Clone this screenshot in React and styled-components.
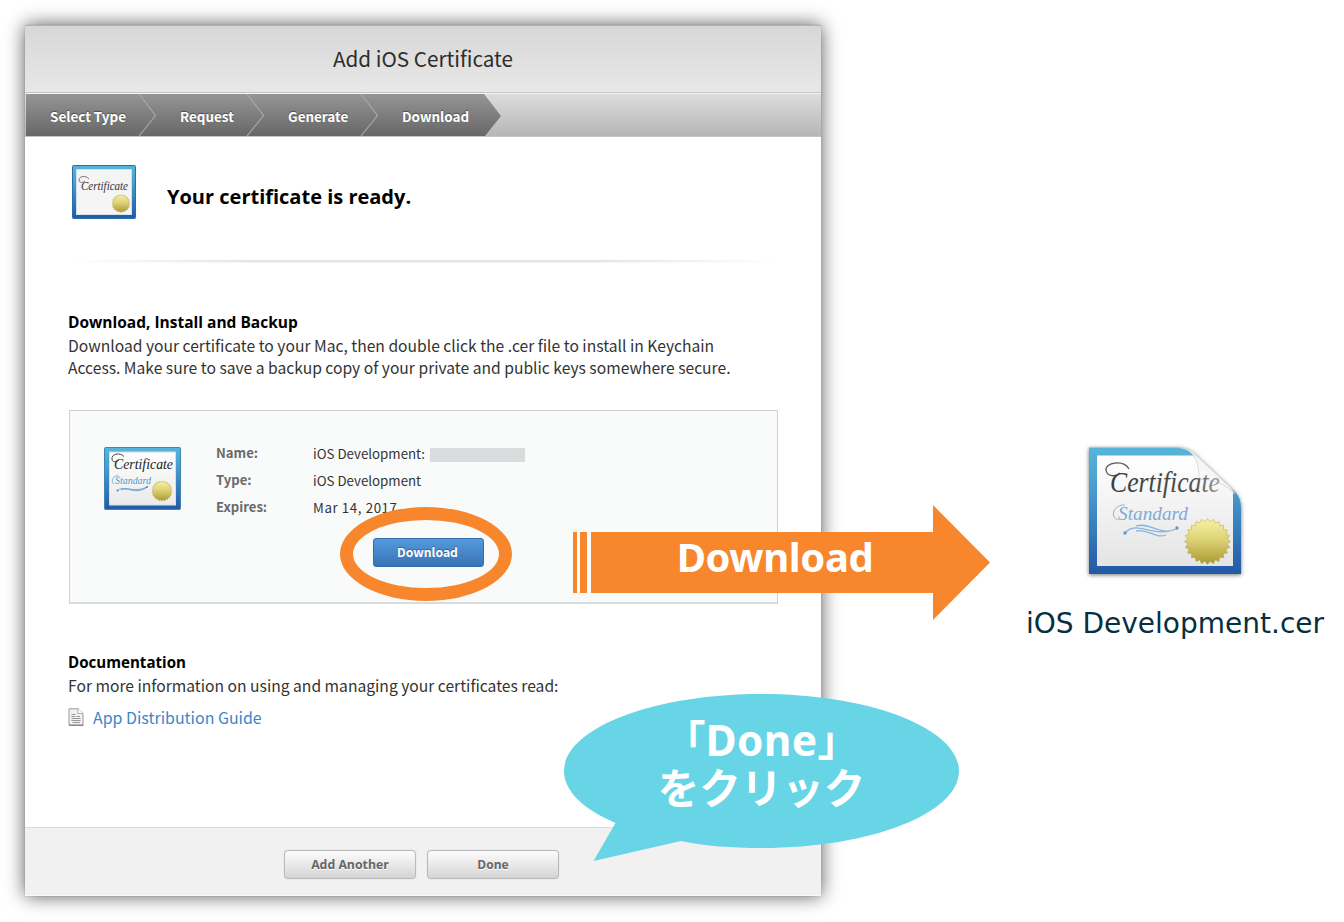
import React from "react";
import styled, { createGlobalStyle } from "styled-components";

const GlobalStyle = createGlobalStyle`
  * { box-sizing: border-box; }
  body { margin: 0; background: #fff; }
  h1, h2, h3, p, dl, dt, dd { margin: 0; font-weight: 400; }
`;

const uiFont = `"Noto Sans CJK JP", "Open Sans", sans-serif`;
const headingFont = `"Open Sans", "Noto Sans", sans-serif`;

const Page = styled.main`
  position: relative;
  display: flex;
  align-items: flex-start;
  width: 1344px;
  height: 922px;
  overflow: hidden;
  padding: 25px 0 0 25px;
  font-family: ${uiFont};
`;

const Window = styled.section`
  display: flex;
  flex-direction: column;
  flex: none;
  width: 796px;
  height: 871px;
  background: #fff;
  box-shadow: 0 0 18px rgba(0, 0, 0, 0.66), 0 0 1px rgba(0, 0, 0, 0.25);
`;

const TitleBar = styled.header`
  display: flex;
  align-items: center;
  justify-content: center;
  height: 69px;
  padding-bottom: 3px;
  border-top: 1px solid #b4b4b4;
  border-bottom: 1px solid #f4f4f4;
  background: linear-gradient(#d7d7d7, #e8e8e8);
  box-shadow: inset 0 -1px 0 #c4c4c4;
`;

const Title = styled.h1`
  font-size: 20.7px;
  line-height: 30px;
  color: #2d2d2d;
`;

const Steps = styled.nav`
  display: flex;
  flex: none;
  height: 43px;
  padding-left: 1px;
  background: linear-gradient(#dcdcdc, #b6b6b6);
  border-bottom: 1px solid #c4c4c4;
`;

const Step = styled.div`
  display: flex;
  justify-content: space-between;
  width: ${(p) => p.$width}px;
  padding-left: 24px;
  background: linear-gradient(#959595, #676767) left /
    ${(p) => (p.$last ? "calc(100% - 17px)" : "100%")} 100% no-repeat;
  color: #fff;
  font-size: 13.45px;
  font-weight: 700;
  line-height: 44px;
  text-shadow: 0 -1px 1px rgba(0, 0, 0, 0.4);
`;

const Chevron = styled.svg`
  display: block;
  width: 18px;
  height: 42px;
`;

const Body = styled.div`
  flex: 1;
  padding: 28px 43px 0 43px;
`;

const Ready = styled.div`
  display: flex;
  gap: 31px;
  height: 95px;
  padding-left: 4px;
`;

const ReadyText = styled.h2`
  margin-top: 18px;
  font-family: ${headingFont};
  font-size: 20px;
  font-weight: 700;
  line-height: 28px;
  color: #000;
`;

const Divider = styled.div`
  width: 704px;
  height: 3px;
  margin-left: 4px;
  background: linear-gradient(90deg, #fff, transparent 25%, transparent 75%, #fff),
    linear-gradient(#e0e0e0, #e8e8e8 50%, #f8f8f8);
`;

const Section = styled.section`
  margin-top: ${(p) => p.$top}px;
`;

const SectionTitle = styled.h3`
  font-family: ${headingFont};
  font-size: ${(p) => p.$size}px;
  font-weight: 700;
  line-height: 24px;
  margin-bottom: 1px;
  color: #000;
`;

const Text = styled.p`
  font-size: 15.65px;
  line-height: 22px;
  white-space: pre-line;
  color: #333;
`;

const Card = styled.div`
  display: flex;
  gap: 35px;
  width: 709px;
  height: 194px;
  margin: 31px 0 0 1px;
  padding: 28px 34px;
  border: 1px solid #cfd2d2;
  border-bottom: 2px solid #d9dcdc;
  background: #f9fbfa;
`;

const CardIcon = styled.div`
  padding-top: 8px;
`;

const Details = styled.dl`
  display: grid;
  grid-template-columns: 97px auto;
  grid-auto-rows: 27px;
  align-content: start;
  line-height: 27px;
  font-size: 13.3px;
`;

const Label = styled.dt`
  font-size: 13.1px;
  font-weight: 700;
  color: #6a6a6a;
`;

const Value = styled.dd`
  display: flex;
  align-items: center;
  gap: 5px;
  padding-top: 1px;
  color: #333;
  letter-spacing: ${(p) => p.$spacing || 0}px;
`;

const Redacted = styled.span`
  width: 95px;
  height: 14px;
  margin-top: 3px;
  background: #dadbdd;
`;

const DownloadButton = styled.button`
  grid-column: 1 / -1;
  width: 111px;
  height: 29px;
  margin: 18px 0 0 157px;
  padding: 0 2px 1px 0;
  border: 1px solid #2f6dad;
  border-radius: 3px;
  background: linear-gradient(#549bdc, #3a72b8);
  color: #fff;
  font: 700 12.2px ${uiFont};
  line-height: 26px;
  text-shadow: 0 -1px 1px rgba(0, 0, 0, 0.3);
`;

const GuideLink = styled.a`
  display: flex;
  align-items: center;
  gap: 9px;
  margin-top: 8px;
  font-size: 15.95px;
  line-height: 24px;
  color: #3a87c8;
`;

const Footer = styled.footer`
  display: flex;
  justify-content: center;
  gap: 11px;
  height: 69px;
  padding: 22px 3px 0 0;
  border-top: 1px solid #dcdcdc;
  border-bottom: 1px solid #fafafa;
  background: #f1f1f1;
`;

const FooterButton = styled.button`
  width: 132px;
  height: 29px;
  padding: 1px 0 0;
  border: 1px solid #b9b9b9;
  border-radius: 4px;
  background: linear-gradient(#fdfdfd, #d4d4d4);
  box-shadow: 0 0 1px rgba(0, 0, 0, 0.25);
  color: #666;
  font: 700 ${(p) => p.$size}px ${headingFont};
  line-height: 26px;
  text-shadow: 0 1px 0 #fff;
`;

const FileResult = styled.figure`
  display: flex;
  flex-direction: column;
  align-items: flex-start;
  width: 310px;
  margin: 416px 0 0 205px;
`;

const FileIcon = styled.div`
  height: 140px;
  margin-left: 56px;
`;

const FileName = styled.figcaption`
  margin-top: 25px;
  font: 28px "DejaVu Sans", sans-serif;
  line-height: 36px;
  white-space: nowrap;
  color: #06303f;
`;

const Ring = styled.div`
  position: absolute;
  left: 340px;
  top: 507px;
  width: 172px;
  height: 94px;
  border: 13px solid #f8862d;
  border-radius: 50%;
`;

const Callout = styled.div`
  position: absolute;
  left: ${(p) => p.$x}px;
  top: ${(p) => p.$y}px;
  width: ${(p) => p.$w}px;
  height: ${(p) => p.$h}px;
  color: #fff;
  text-align: center;
  font-weight: 700;
`;

const CalloutShape = styled.svg`
  position: absolute;
  inset: 0;
  width: 100%;
  height: 100%;
`;

const ArrowText = styled.div`
  position: relative;
  padding: 25px 14px 0 0;
  font-family: "Noto Sans", sans-serif;
  font-size: 40px;
  line-height: 54px;
  letter-spacing: -0.4px;
`;

const BubbleText = styled.div`
  position: relative;
  display: flex;
  flex-direction: column;
  align-items: center;
  padding-top: 21px;
  font-family: "Noto Sans", "Noto Sans CJK JP", sans-serif;
  font-size: 41.5px;
`;

const BubbleLine = styled.div`
  height: 49px;
  line-height: 49px;
  white-space: nowrap;
`;

const BubbleWord = styled.span`
  font-size: 42.5px;
  letter-spacing: 0.3px;
`;

const Drawing = styled.svg`
  display: block;
  flex: none;
  overflow: visible;
`;

function sealPoints(cx, cy, r, teeth) {
  return Array.from({ length: teeth * 2 }, (_, i) => {
    const a = (Math.PI * i) / teeth;
    const d = i % 2 ? r * 0.87 : r;
    return `${(cx + d * Math.sin(a)).toFixed(2)},${(cy - d * Math.cos(a)).toFixed(2)}`;
  }).join(" ");
}

function Seal({ id, cx, cy, r, teeth }) {
  return (
    <>
      <linearGradient id={id} x1="0" y1="0" x2="0" y2="1">
        <stop offset="0" stopColor="#f8f2a4" />
        <stop offset="0.45" stopColor="#ddd377" />
        <stop offset="1" stopColor="#a9982f" />
      </linearGradient>
      <polygon points={sealPoints(cx, cy, r, teeth)} fill={`url(#${id})`} stroke="#b5a440" strokeWidth="0.5" />
    </>
  );
}

function BlueFrame({ id }) {
  return (
    <linearGradient id={id} x1="0" y1="0" x2="0" y2="1">
      <stop offset="0" stopColor="#58b5d9" />
      <stop offset="0.3" stopColor="#4a9fd0" />
      <stop offset="1" stopColor="#2259a5" />
    </linearGradient>
  );
}

const script = { fontFamily: '"Liberation Serif", serif', fontStyle: "italic" };

function SmallCertificate() {
  return (
    <Drawing width="64" height="54" viewBox="0 0 64 54">
      <BlueFrame id="frameS" />
      <rect x="0.5" y="0.5" width="63" height="53" rx="1" fill="url(#frameS)" stroke="#2d6ca6" />
      <rect x="4.5" y="4.5" width="55" height="45" fill="#f5f5f5" stroke="#cfe0ee" />
      <path d="M17 14C14 10 7 11 7 15C7 18 11 18 13 16" fill="none" stroke="#555" strokeWidth="0.8" />
      <text x="9" y="24.500" {...script} fontSize="12.5" textLength="47" lengthAdjust="spacingAndGlyphs" fill="#333">Certificate</text>
      <Seal id="sealS" cx={49} cy={38.5} r={9} teeth={22} />
    </Drawing>
  );
}

function StandardCertificate() {
  return (
    <Drawing width="77" height="63" viewBox="0 0 77 63">
      <BlueFrame id="frameM" />
      <linearGradient id="paperM" x1="0" y1="0" x2="0" y2="1">
        <stop offset="0" stopColor="#fff" />
        <stop offset="1" stopColor="#eaeaea" />
      </linearGradient>
      <rect x="0.5" y="0.5" width="76" height="62" rx="1" fill="url(#frameM)" stroke="#3f85b5" />
      <rect x="5.500" y="5" width="66" height="53" fill="url(#paperM)" stroke="#cfe0ee" />
      <path d="M20 9.500C16 5 7 7 8 12C8 16 13 15 15 13" fill="none" stroke="#333" strokeWidth="0.9" />
      <text x="10" y="22" {...script} fontSize="15.5" textLength="59" lengthAdjust="spacingAndGlyphs" fill="#222">Certificate</text>
      <path d="M15 29C9 28 6 34 10 37" fill="none" stroke="#4b9bd0" strokeWidth="0.7" />
      <text x="11" y="37" {...script} fontSize="10.5" textLength="36" lengthAdjust="spacingAndGlyphs" fill="#4b9bd0">Standard</text>
      <path d="M13 44C20 37 29 47 43 40M17 43C24 39 30 48 42 41" fill="none" stroke="#4b9bd0" strokeWidth="0.8" />
      <circle cx="13.5" cy="43.5" r="1" fill="#3389c5" />
      <circle cx="43" cy="40" r="1" fill="#3389c5" />
      <Seal id="sealM" cx={58} cy={44} r={10.2} teeth={22} />
    </Drawing>
  );
}

function CertificateFile() {
  return (
    <Drawing width="166" height="140" viewBox="0 0 166 140">
      <BlueFrame id="frameL" />
      <linearGradient id="paperL" x1="0" y1="0" x2="0" y2="1">
        <stop offset="0" stopColor="#fff" />
        <stop offset="1" stopColor="#e4e4e4" />
      </linearGradient>
      <linearGradient id="fold" x1="0" y1="1" x2="0.6" y2="0.4">
        <stop offset="0" stopColor="#e3e3e3" />
        <stop offset="0.5" stopColor="#fff" />
        <stop offset="1" stopColor="#f2f2f2" />
      </linearGradient>
      <linearGradient id="ink" x1="0" y1="0" x2="1" y2="0">
        <stop offset="0" stopColor="#3c3c3c" />
        <stop offset="0.78" stopColor="#505050" />
        <stop offset="1" stopColor="#a8a8a8" />
      </linearGradient>
      <filter id="fileShadow" x="-10%" y="-10%" width="120%" height="120%">
        <feDropShadow dx="0" dy="1" stdDeviation="2" floodColor="#000" floodOpacity="0.55" />
      </filter>
      <path d="M7 6.500H95C102 6.500 108 8 113 13L150 48C156 53 159 58 159 68V133H7Z" fill="url(#frameL)" filter="url(#fileShadow)" />
      <path d="M15 14.500H111L151 51V125H15Z" fill="url(#paperL)" />
      <path d="M96 6.500C108 8 117 14 117 38C130 38 144 43 153 53L149 47L112 12C107 8 102 6.500 96 6.500Z" fill="url(#fold)" stroke="#cfcfcf" strokeWidth="0.7" />
      <path d="M47 28C41 18 23 22 24 29C25 36 34 36 38 32" fill="none" stroke="#555" strokeWidth="1.3" />
      <text x="28" y="51" {...script} fontSize="30" textLength="110" lengthAdjust="spacingAndGlyphs" fill="url(#ink)">Certificate</text>
      <path d="M43 64C32 63 27 76 36 79" fill="none" stroke="#89b2dc" strokeWidth="1" />
      <text x="36" y="79" {...script} fontSize="19" textLength="70" lengthAdjust="spacingAndGlyphs" fill="#7fabd8">Standard</text>
      <path d="M43 92C55 78 71 98 94 88M54 85C65 81 76 92 87 90M54 90C66 87 72 98 84 94" fill="none" stroke="#8ab3de" strokeWidth="1.3" />
      <circle cx="43" cy="92" r="1.700" fill="#5c98d0" />
      <circle cx="95" cy="87" r="1.700" fill="#5c98d0" />
      <Seal id="sealL" cx={125.5} cy={100.5} r={23} teeth={24} />
    </Drawing>
  );
}

function DocumentIcon() {
  return (
    <Drawing width="16" height="18" viewBox="0 0 16 18">
      <path d="M1 .8H10L15 5.500V17H1Z" fill="#f1f1f1" stroke="#999" />
      <path d="M10 .8V5.500H15" fill="#fff" stroke="#999" strokeWidth="0.8" />
      <path d="M3.500 6.500H7.500M8.500 8.500H12M3.500 8.500H7.500M3.500 10.500H12.500M3.500 12.500H12.500M4.500 14.500H12" stroke="#8d8d8d" strokeWidth="0.9" />
      <path d="M1 17.300H15.500" stroke="#777" strokeWidth="1" />
    </Drawing>
  );
}

const steps = [
  { name: "Select Type", width: 130 },
  { name: "Request", width: 108 },
  { name: "Generate", width: 114 },
  { name: "Download", width: 123, last: true },
];

function StepEnd({ last }) {
  return (
    <Chevron viewBox="0 0 18 42">
      {last ? (
        <>
          <linearGradient id="stepTip" x1="0" y1="0" x2="0" y2="1">
            <stop offset="0" stopColor="#959595" />
            <stop offset="1" stopColor="#676767" />
          </linearGradient>
          <path d="M1 0L18 22L2 42H1Z" fill="url(#stepTip)" />
        </>
      ) : (
        <path d="M1 0L17.500 21.500L1 42" fill="none" stroke="#aaa" strokeWidth="1.100" />
      )}
    </Chevron>
  );
}

export default function App() {
  return (
    <Page>
      <GlobalStyle />
      <Window>
        <TitleBar>
          <Title>Add iOS Certificate</Title>
        </TitleBar>
        <Steps>
          {steps.map((s) => (
            <Step key={s.name} $width={s.width} $last={s.last}>
              {s.name}
              <StepEnd last={s.last} />
            </Step>
          ))}
        </Steps>
        <Body>
          <Ready>
            <SmallCertificate />
            <ReadyText>Your certificate is ready.</ReadyText>
          </Ready>
          <Divider />
          <Section $top={47}>
            <SectionTitle $size={15.5}>Download, Install and Backup</SectionTitle>
            <Text>
              {"Download your certificate to your Mac, then double click the .cer file to install in Keychain\nAccess. Make sure to save a backup copy of your private and public keys somewhere secure."}
            </Text>
            <Card>
              <CardIcon>
                <StandardCertificate />
              </CardIcon>
              <Details>
                <Label>Name:</Label>
                <Value>
                  iOS Development: <Redacted />
                </Value>
                <Label>Type:</Label>
                <Value>iOS Development</Value>
                <Label>Expires:</Label>
                <Value $spacing={0.6}>Mar 14, 2017</Value>
                <DownloadButton>Download</DownloadButton>
              </Details>
            </Card>
          </Section>
          <Section $top={46}>
            <SectionTitle $size={15.1}>Documentation</SectionTitle>
            <Text>For more information on using and managing your certificates read:</Text>
            <GuideLink>
              <DocumentIcon />
              App Distribution Guide
            </GuideLink>
          </Section>
        </Body>
        <Footer>
          <FooterButton $size={12.3}>Add Another</FooterButton>
          <FooterButton $size={12}>Done</FooterButton>
        </Footer>
      </Window>
      <FileResult>
        <FileIcon>
          <CertificateFile />
        </FileIcon>
        <FileName>iOS Development.cer</FileName>
      </FileResult>
      <Ring />
      <Callout $x={573} $y={505} $w={418} $h={115}>
        <CalloutShape viewBox="0 0 418 115">
          <path d="M0 27H4V88H0ZM7 27H14V88H7ZM18 27H360V0L417 57.500L360 115V88H18Z" fill="#f8862d" />
        </CalloutShape>
        <ArrowText>Download</ArrowText>
      </Callout>
      <Callout $x={564} $y={694} $w={395} $h={168}>
        <CalloutShape viewBox="0 0 395 168">
          <path d="M51.500 129C19 115 0 97 0 77C0 34.500 88.500 0 197.500 0S395 34.500 395 77S306.500 154 197.500 154C168 154 141 152 117 147L29.500 167Z" fill="#67d5e6" />
        </CalloutShape>
        <BubbleText>
          <BubbleLine>
            「<BubbleWord>Done</BubbleWord>」
          </BubbleLine>
          <BubbleLine>をクリック</BubbleLine>
        </BubbleText>
      </Callout>
    </Page>
  );
}
